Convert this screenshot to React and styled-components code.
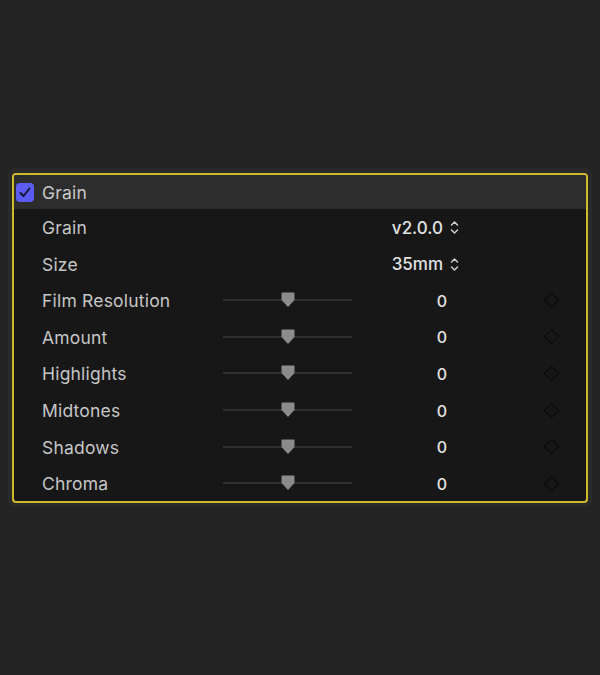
import React from 'react';
import styled, { createGlobalStyle } from 'styled-components';

const GlobalStyle = createGlobalStyle`
  html, body {
    margin: 0;
    background: #232323;
  }
  body {
    font-family: Inter, "Noto Sans", sans-serif;
    -webkit-font-smoothing: antialiased;
  }
`;

const Page = styled.div`
  height: 675px;
  padding: 168px 8px 0;
  box-sizing: border-box;
`;

const Panel = styled.div`
  background: #2a2a2a;
  border-radius: 7px;
  padding: 5px 4px 4px;
`;

const Frame = styled.div`
  border: 2px solid #d3b82c;
  border-radius: 4px;
  background: #171717;
  overflow: hidden;
`;

const Header = styled.div`
  display: flex;
  align-items: center;
  gap: 8px;
  height: 34px;
  padding-left: 2px;
  background: #2d2d2d;
`;

const Check = styled.div`
  width: 18px;
  height: 19px;
  border-radius: 4px;
  background: #5d5cf2;
  display: flex;
  align-items: center;
  justify-content: center;
`;

const Title = styled.span`
  font-size: 17.5px;
  letter-spacing: 0.2px;
  color: #c9c9c9;
`;

const Row = styled.div`
  display: grid;
  grid-template-columns: 181px 129px 180px 38px;
  align-items: center;
  height: 36.55px;
  box-sizing: border-box;
  padding: 1px 0 0 28px;
`;

const Label = styled.span`
  font-size: 17.5px;
  letter-spacing: 0.2px;
  color: #c6c6c6;
`;

const Track = styled.div`
  position: relative;
  height: 2px;
  margin-top: -1px;
  background: #303030;
`;

const Thumb = styled.svg`
  position: absolute;
  left: ${p => p.$pos * 100}%;
  top: -7px;
  transform: translateX(-50%);
`;

const Value = styled.span`
  text-align: center;
  font-size: 16px;
  font-weight: 500;
  color: #e4e4e4;
`;

const Popup = styled.div`
  grid-column: 2 / 4;
  display: flex;
  align-items: center;
  justify-content: flex-end;
  gap: 7px;
  padding-right: 73px;
  font-size: 17px;
  font-weight: 500;
  color: #e2e2e2;
`;

const Keyframe = styled.div`
  justify-self: center;
  width: 9px;
  height: 9px;
  margin-top: -1px;
  border: 1px solid #0a0a0a;
  transform: rotate(45deg);
`;

const CheckMark = () => (
  <svg width="12" height="11" viewBox="0 0 12 11">
    <path d="M1.5 6 L4.5 9 L10.5 1.5" fill="none" stroke="#15153a" strokeWidth="2" strokeLinecap="round" strokeLinejoin="round" />
  </svg>
);

const Chevrons = () => (
  <svg width="9" height="15" viewBox="0 0 9 15">
    <path d="M1.5 5 L4.5 2 L7.5 5 M1.5 10 L4.5 13 L7.5 10" fill="none" stroke="#cfcfcf" strokeWidth="1.5" strokeLinecap="round" strokeLinejoin="round" />
  </svg>
);

const Slider = ({ pos }) => (
  <Track>
    <Thumb $pos={pos} width="14" height="16" viewBox="0 0 14 16">
      <path d="M1.5 0.5 H12.5 Q13.5 0.5 13.5 1.5 V8 L7 15 L0.5 8 V1.5 Q0.5 0.5 1.5 0.5 Z" fill="#8b8b8b" />
    </Thumb>
  </Track>
);

const popups = [
  { label: 'Grain', value: 'v2.0.0' },
  { label: 'Size', value: '35mm' },
];

const params = ['Film Resolution', 'Amount', 'Highlights', 'Midtones', 'Shadows', 'Chroma'];

const App = () => {
  return (
    <>
      <GlobalStyle />
      <Page>
        <Panel>
          <Frame>
            <Header>
              <Check>
                <CheckMark />
              </Check>
              <Title>Grain</Title>
            </Header>
            {popups.map(p => (
              <Row key={p.label}>
                <Label>{p.label}</Label>
                <Popup>
                  <span>{p.value}</span>
                  <Chevrons />
                </Popup>
              </Row>
            ))}
            {params.map(name => (
              <Row key={name}>
                <Label>{name}</Label>
                <Slider pos={0.5} />
                <Value>0</Value>
                <Keyframe />
              </Row>
            ))}
          </Frame>
        </Panel>
      </Page>
    </>
  );
};

export default App;
